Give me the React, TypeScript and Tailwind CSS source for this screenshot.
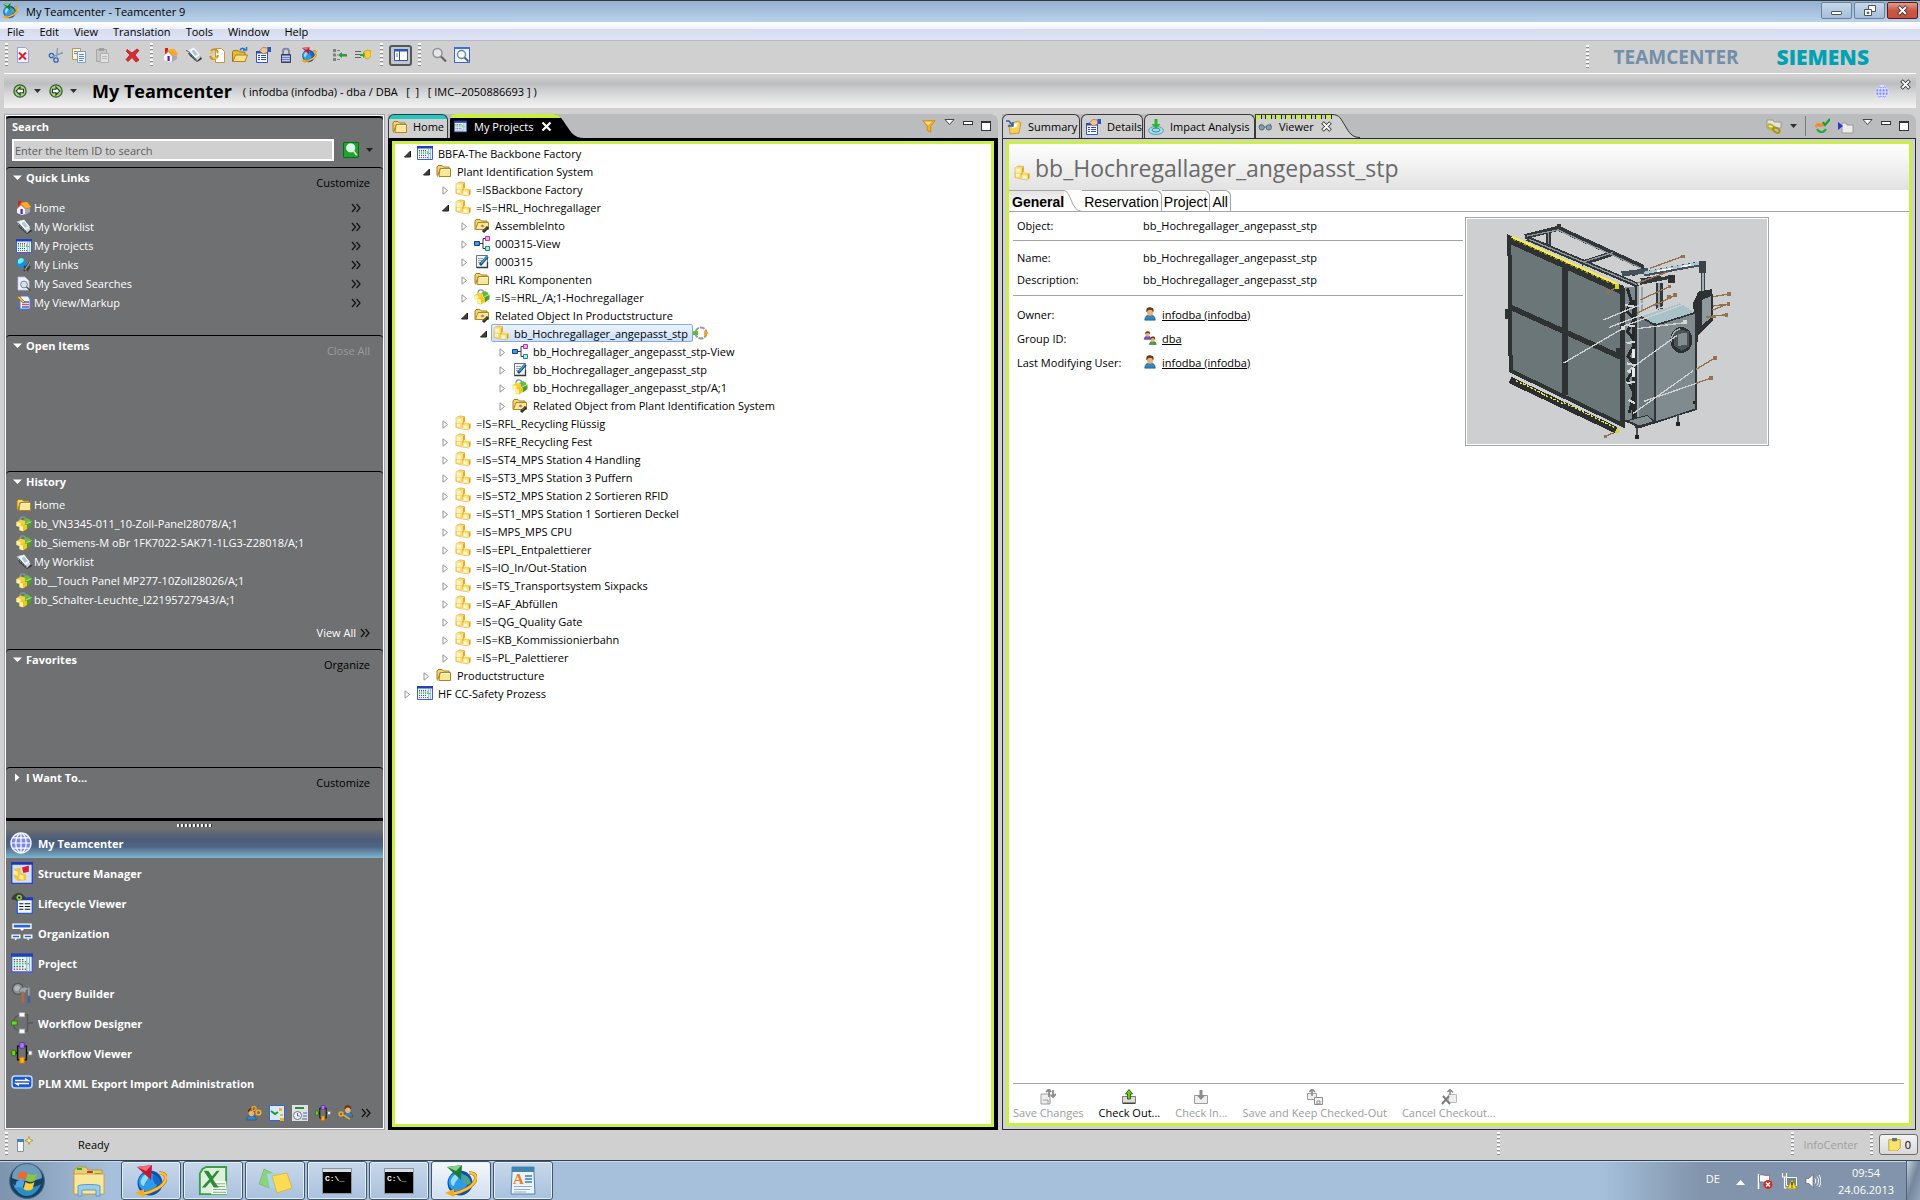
import React from 'react'

type P = { children?: React.ReactNode; s?: number; box?: string; className?: string }

function Svg({ children, s = 16, box = '0 0 16 16', className = '' }: P) {
  return (
    <svg width={s} height={s} viewBox={box} className={'shrink-0 ' + className} fill="none" aria-hidden="true">
      {children}
    </svg>
  )
}

const Globe = ({ s = 16, pale = false }: { s?: number; pale?: boolean }) => (
  <Svg s={s}>
    <circle cx="8" cy="8" r="7.3" fill={pale ? '#7f8dfb' : '#7c88ee'} stroke="#f4f6ff" strokeWidth={pale ? 0.8 : 1} />
    <path d="M8 1v14M1 8h14M2.4 4.3h11.2M2.4 11.7h11.2" stroke="#fff" strokeWidth="0.9" />
    <ellipse cx="8" cy="8" rx="3.8" ry="7" stroke="#fff" strokeWidth="0.9" />
  </Svg>
)

const TcLogo = ({ s = 16, green = false }: { s?: number; green?: boolean }) => (
  <Svg s={s} box="0 0 32 32">
    <circle cx="15" cy="18" r="12.5" fill="#0c4fb4" />
    <circle cx="13" cy="17" r="9.5" fill="#2f9be8" />
    <path d="M6 15c2-5 6-7 9-6-1 5-5 7-6 12-2 0-4-3-3-6z" fill="#8ee0f4" />
    <path d="M18 10c4 0 7 3 8 8-3 3-6 2-7-1-1-2-2-4-1-7z" fill={green ? '#4fa48c' : '#1369cc'} />
    <path d="M24 8c6 0 8 3 6 8-3 6-12 11-23 13" stroke="#b8720a" strokeWidth="3.6" />
    <path d="M24 8c6 0 8 3 6 8-3 6-12 11-23 13" stroke="#fcc335" strokeWidth="2.4" />
    <path d="M0 28l9-4v8z" fill="#f5ad1e" />
    <path d="M2 2l15-2-1 15z" fill={green ? '#1c7c34' : '#c9142c'} />
    <path d="M2 2l15-2-6 6z" fill={green ? '#8ccf8c' : '#e8707c'} />
  </Svg>
)

const House = () => (
  <Svg>
    <path d="M2 1h3v6H2z" fill="#e01818" />
    <path d="M1 9l4-4 4 4v5l-3 1-5-2z" fill="#f4f4fa" />
    <path d="M9 9l5-1v4l-5 3z" fill="#a9a9b4" />
    <path d="M4.500 9h2.200v5H4.500z" fill="#4a22c4" />
    <path d="M0 9l5-5 4 5 6-2-4-5-6 1z" fill="#f58a10" />
    <path d="M5 3l6-1 4 5-5 1.500z" fill="#fbab28" />
  </Svg>
)

const Worklist = () => (
  <Svg>
    <path d="M3 8l3-6 9 8 1 2-5 3z" fill="#2e3337" />
    <path d="M0 3l5-2 10 9-4 4z" fill="#cdd4d8" />
    <path d="M3 3l5-2.500L14 8l-5 3z" fill="#f6fafc" />
    <path d="M5.500 4L8 2.500l4 5L9 9z" fill="#a9c9e2" />
    <path d="M0 3.500l2.500 1 8 8.500" stroke="#5c6368" />
    <path d="M2 7l2-1M4 9l2-1M6 11l2-1M8 13l2-1" stroke="#4a5055" />
  </Svg>
)

const ProjectIcon = ({ s = 16 }: { s?: number }) => (
  <Svg s={s}>
    <path d="M.5 1.500h15v13H.5z" fill="#d9fbfb" stroke="#4a58e8" />
    <path d="M0 1h16v2.500H0z" fill="#2440b8" />
    <path d="M2 5.500h7M2 10.500h7" stroke="#35556a" strokeDasharray="1 1" />
    <path d="M2 7h9M2 12.500h9" stroke="#e4304c" strokeDasharray="1 1" />
    <path d="M2 8.500h12" stroke="#2cc850" strokeDasharray="1 1" />
    <path d="M11.500 4v10M13.500 4v10" stroke="#8fa4b4" strokeWidth="0.7" />
  </Svg>
)

const Links = () => (
  <Svg>
    <circle cx="5.500" cy="6" r="5" fill="#178fdc" />
    <path d="M2 3c3-3 5-2 6 0-1 3-5 5-6 3z" fill="#6ff0dc" />
    <path d="M8 14l3-5 3-4M11 14l3-5M8 9l3 3" stroke="#3c3f42" strokeWidth="2" />
    <path d="M9 13l3-5 2-3" stroke="#b4b8ba" />
  </Svg>
)

const SavedSearch = () => (
  <Svg>
    <path d="M2 1h7l4 4v9H2z" fill="#eef0ff" stroke="#b9bfe8" strokeWidth="0.8" />
    <circle cx="8" cy="8.500" r="3.400" fill="#d4e2ea" stroke="#7c8488" />
    <path d="M10.500 11l4 3.500" stroke="#4c5054" strokeWidth="1.600" />
  </Svg>
)

const Markup = () => (
  <Svg>
    <path d="M4 1h8l2 3v10H4z" fill="#f4f7ff" stroke="#4a70dc" />
    <path d="M6 7h7M6 12h7" stroke="#3a62d8" strokeWidth="1.500" />
    <path d="M6 9.500h7" stroke="#e0504c" strokeWidth="1.500" />
    <path d="M1 2l2-1 6 6-2 1z" fill="#f6c540" stroke="#8c5410" strokeWidth="0.7" />
    <path d="M0 13h4" stroke="#3a62d8" />
  </Svg>
)

const Folder = () => (
  <Svg>
    <path d="M1 12.500V4l1-1.500h4L7.500 4H13v2" fill="#f3d672" stroke="#a67c17" />
    <path d="M4 5.500h10.500v8H3z" fill="#fbe79b" stroke="#b08520" />
    <path d="M1.500 13.500L4 6" stroke="#b08520" />
    <path d="M5 6.500h9" stroke="#fffbe0" />
  </Svg>
)

const RelFolder = () => (
  <Svg>
    <path d="M1 12.500V4l1-1.500h4L7.500 4H13v2" fill="#f3d672" stroke="#a67c17" />
    <path d="M1.500 12.500L4 5.500h10.500v7z" fill="#fbe79b" stroke="#b08520" />
    <path d="M6.500 9l2-1.500 2 1.500-2 1.500z" fill="#a08c50" />
    <path d="M9 15l5-5" stroke="#26282a" strokeWidth="3" />
    <path d="M10 13.500l3-3" stroke="#93989a" strokeWidth="0.8" />
  </Svg>
)

const Item = ({ s = 16 }: { s?: number }) => (
  <Svg s={s}>
    <path d="M1.500 2.500L5 .8l5 1-2.500 1.400z" fill="#fbd660" />
    <path d="M7.500 3.200L10 1.800v5L7.500 8z" fill="#f0a816" />
    <path d="M1.500 2.500l6 .7v4.800l-6-.8z" fill="#fde98a" />
    <path d="M.6 7.500l6.200.8v5.200l-6.200-1z" fill="#fbdc62" />
    <path d="M6.800 8.300L9 7v5l-2.200 1.500z" fill="#f0a816" />
    <path d="M7.500 9.500l2.200-2 5.800.7-2 1.800z" fill="#fbd242" />
    <path d="M13.500 10l2-1.800v4.800l-2 1.900z" fill="#e8980c" />
    <path d="M7.500 9.500l6 .5v4.900l-6-.9z" fill="#fdeb94" />
    <path d="M2.500 4h3.500v2.500H2.500zM1.800 9h3.500v2.500H1.800zM8.800 10.800h3.200v2.500H8.800z" fill="#fff9dc" />
    <path d="M1 2.500v10l6 1.500 6.500 1M1.500 2.500L5 .8l5 1" stroke="#dc9434" strokeWidth="0.500" />
  </Svg>
)

const Revision = () => (
  <Svg>
    <path d="M4 4C4 0 9 0 9.500 3" stroke="#7b9aa6" strokeWidth="1.400" />
    <path d="M7 4l4-2 3.500 2-1 3.500-5 .5z" fill="#6cb844" />
    <path d="M.5 6l4-2.500L9 5v4l-4 2-4.500-1z" fill="#f6d238" />
    <path d="M.5 6l4 1v4l-4-1z" fill="#fff4a8" />
    <path d="M10 8l5.500-2.500v4.500L11 13.500z" fill="#4aa028" />
    <path d="M10 8l5.500-2.500" stroke="#b8e896" />
    <path d="M3.500 9.500l4-1.500L11 9v4l-4 2.500-3.500-1z" fill="#f2c424" />
    <path d="M3.500 9.500l3.500 1v4.500l-3.500-1z" fill="#fff4a8" />
  </Svg>
)

const ViewIcon = () => (
  <Svg>
    <path d="M6 8.500h3V3.500h2M9 8.500v5h2" stroke="#30383c" />
    <path d="M.5 6.500h5v4h-5z" fill="#3ba0d8" stroke="#1c3c94" />
    <path d="M11.500 1.500h4v4h-4z" fill="#f6a8ee" stroke="#c030b4" />
    <path d="M11.500 11.500h4v4h-4z" fill="#a6efe0" stroke="#1f8f7c" />
  </Svg>
)

const DocPen = () => (
  <Svg>
    <path d="M2.500 2.500h11v12h-11z" fill="#f3f5f6" stroke="#6c7276" />
    <path d="M4 5.500h5M4 7.500h4M4 9.500h3" stroke="#9ba2a6" />
    <path d="M2.500 14.500h11V9" stroke="#33383c" strokeWidth="1.300" />
    <path d="M6 12L13.500 3.500" stroke="#12486f" strokeWidth="2.800" />
    <path d="M7 10.500l6.500-7.500" stroke="#3fa4e6" strokeWidth="1.300" />
  </Svg>
)

const Person = ({ x = 0, y = 0, body = '#2f86c4', k = 1 }: { x?: number; y?: number; body?: string; k?: number }) => (
  <g transform={`translate(${x} ${y}) scale(${k})`}>
    <path d="M2 15c0-4 2-6 6-6s6 2 6 6z" fill={body} stroke="#24485f" strokeWidth="0.7" />
    <ellipse cx="8" cy="5.500" rx="3.600" ry="4.600" fill="#f3ae72" />
    <path d="M4 6C3 1 6 0 9 .5 12 1 13 3 11.500 6L10 3.500 6.500 3z" fill="#5c3a20" />
  </g>
)

const TOOL: Record<string, React.ReactNode> = {
  close: (
    <>
      <path d="M2.500.5h8l3 3v12h-11z" fill="#f2f4ff" stroke="#98a2d8" />
      <path d="M4 5.500l7 7M11 5.500l-7 7" stroke="#d8242c" strokeWidth="2" />
    </>
  ),
  cut: (
    <>
      <circle cx="3.500" cy="8.500" r="2.200" stroke="#2d68b0" strokeWidth="1.300" />
      <circle cx="8" cy="13" r="2.200" stroke="#2d68b0" strokeWidth="1.300" />
      <path d="M5 9.500l10-4M8.500 11L9.500 1" stroke="#7ba0c0" strokeWidth="1.400" />
    </>
  ),
  copy: (
    <>
      <path d="M1.500 1.500h8v11h-8z" fill="#f8f4dc" stroke="#b59c4c" />
      <path d="M6.500 4.500h8v11h-8z" fill="#eef6ff" stroke="#8c9cc0" />
      <path d="M3 4.500h3M3 6.500h3M8 7.500h5M8 9.500h5M8 11.500h5M8 13.500h4" stroke="#5f8cc8" />
    </>
  ),
  paste: (
    <>
      <path d="M2.500 2.500h10v12h-10z" fill="#c6c6c6" stroke="#a8a8a8" />
      <path d="M5 1h5v3H5z" fill="#a0a0a0" />
      <path d="M6.500 6.500h8v9h-8z" fill="#e2e2e2" stroke="#b2b2b2" />
      <path d="M8 9.500h5M8 11.500h5" stroke="#b8b8b8" />
    </>
  ),
  del: <path d="M2 2.500l5 3.500 5-4 2 1.500-4 4.500 4 5-3 2-4-4.500-4 4-2-2L5 8 1.500 4.500z" fill="#dc2a30" stroke="#a01018" strokeWidth="0.7" />,
  refreshDoc: (
    <>
      <path d="M6.500 1.500h6l3 3v11h-9z" fill="#fff" stroke="#c49a38" />
      <path d="M2 4c4-4 8 0 6 2M9 8c-1 5-7 5-8 1" stroke="#c8941c" strokeWidth="2" />
      <path d="M1 6l3 0M8 11l-4 0" stroke="#f4c53c" strokeWidth="2" />
    </>
  ),
  openFolder: (
    <>
      <path d="M.5 14.500V5l1-1.500H6L7.500 5H13v9.500z" fill="#e9b938" stroke="#a07818" />
      <path d="M1 14.500L3.500 8h12L13 14.500z" fill="#fbe084" stroke="#b08520" />
      <path d="M8 3.500c1-3 4-3 5 0M11 3h3.500V0" stroke="#1f6fd0" strokeWidth="1.500" />
    </>
  ),
  props: (
    <>
      <path d="M1.500 4.500h11v11h-11z" fill="#fff" stroke="#3454dc" />
      <path d="M1 4h12v2.500H1z" fill="#2846d0" />
      <path d="M3 8.500h2M6 8.500h5M3 10.500h2M6 10.500h5M3 12.500h2M6 12.500h5" stroke="#2846d0" />
      <path d="M4 4l4-3.500 5 .5v4L8 7 6 5z" fill="#f4c68c" stroke="#8c5c20" strokeWidth="0.6" />
      <path d="M12.500 0H16v5h-3.500z" fill="#2456c4" />
    </>
  ),
  lock: (
    <>
      <path d="M5 8V4c0-3 6-3 6 0v4" stroke="#8088a8" strokeWidth="2" />
      <path d="M3.500 7.500h9v8h-9z" fill="#7480b4" stroke="#343c60" />
      <path d="M4 9.500h8M4 11.500h8M4 13.500h8" stroke="#c0c8e8" />
    </>
  ),
  insL: (
    <>
      <path d="M1 2h3v3H1zM1 6.500h3v3H1zM1 11h3v3H1z" fill="#7c8284" />
      <path d="M5 3.500h3M5 8h1M5 12.500h3" stroke="#7c8284" />
      <path d="M6 8l4-3v2h5v2.500h-5V11z" fill="#2d9c34" />
    </>
  ),
  insR: (
    <>
      <path d="M0 4.500h6M0 7.500h6M0 10.500h6" stroke="#5c6466" />
      <path d="M5 7h3V5l3 3-3 3V9H5z" fill="#2fa838" />
      <path d="M9 4.500l4-1.500 3 1v5l-3 3-3-1z" fill="#f6cf30" stroke="#b88a10" strokeWidth="0.6" />
    </>
  ),
  find: (
    <>
      <circle cx="6.500" cy="6" r="4.500" fill="#e4e8ea" stroke="#8e9294" strokeWidth="1.500" />
      <path d="M10 9.500l5 5" stroke="#5e6264" strokeWidth="2" />
    </>
  ),
  findBox: (
    <>
      <path d="M.5.5h15v15H.5z" fill="#eef4ff" stroke="#3a64d4" />
      <path d="M0 0h16v2H0z" fill="#3a70e0" />
      <circle cx="7.500" cy="7.500" r="4" fill="#fff" stroke="#5f84a4" strokeWidth="1.400" />
      <path d="M10.500 10.500l4 4" stroke="#5a5e60" strokeWidth="1.800" />
    </>
  ),
}

function ToolBtn({ id, label }: { id: string; label: string }) {
  return (
    <button aria-label={label} className="flex h-6 w-[23px] items-center justify-center">
      {id === 'home' ? <House /> : id === 'worklist' ? <Worklist /> : id === 'tc' ? <TcLogo s={16} /> : <Svg>{TOOL[id]}</Svg>}
    </button>
  )
}

const Grip = ({ h = 'h-6' }: { h?: string }) => (
  <span className={'w-[3px] shrink-0 bg-[repeating-linear-gradient(to_bottom,#f8f8f8_0_2px,#8c8c8c_2px_3px,transparent_3px_4px)] ' + h} />
)
const Sep = () => <span className="h-5 w-px shrink-0 bg-[#7c7c7c]" />
const Caret = ({ c = '#303030' }: { c?: string }) => (
  <svg width="7" height="4" viewBox="0 0 7 4" className="shrink-0" aria-hidden="true">
    <path d="M0 0h7L3.500 4z" fill={c} />
  </svg>
)
const Chevrons = () => (
  <Svg s={10} box="0 0 10 10">
    <path d="M1 1l3.500 4L1 9M5.500 1L9 5 5.500 9" stroke="#151515" strokeWidth="1.300" />
  </Svg>
)
const CloseX = ({ dark = false }: { dark?: boolean }) => (
  <Svg s={11} box="0 0 11 11">
    <path d="M1.500 1.500l8 8M9.500 1.500l-8 8" stroke={dark ? '#fff' : '#333'} strokeWidth={dark ? 2.2 : 3.6} />
    {!dark && <path d="M2 2l7 7M9 2L2 9" stroke="#fff" strokeWidth="1.800" />}
  </Svg>
)

function TitleBar() {
  return (
    <header className="flex h-[22px] items-start justify-between border-t border-[#35383c] bg-gradient-to-b from-[#94b0cf] to-[#bad2eb] pl-[2px]">
      <div className="flex h-5 items-center gap-2">
        <TcLogo s={16} green />
        <span>My Teamcenter - Teamcenter 9</span>
      </div>
      <div className="flex gap-[2px] pr-[2px]">
        <button aria-label="Minimize" className="mt-px flex h-[17px] w-[31px] items-center justify-center rounded-[2px] border border-[#6c819c] bg-gradient-to-b from-[#c6d8ea] to-[#a5bedb]">
          <span className="mt-1 h-[4px] w-[11px] rounded-[1px] border border-[#4c5560] bg-white" />
        </button>
        <button aria-label="Restore" className="mt-px flex h-[17px] w-[31px] items-center justify-center rounded-[2px] border border-[#6c819c] bg-gradient-to-b from-[#c6d8ea] to-[#a5bedb]">
          <Svg s={12} box="0 0 12 12">
            <path d="M4.500.5h7v6h-7z" fill="#fff" stroke="#4c5560" />
            <path d="M.5 4.500h7v6h-7z" fill="#fff" stroke="#4c5560" />
            <path d="M3 7h2v1.500H3z" fill="#8ea6c0" stroke="#4c5560" strokeWidth="0.7" />
          </Svg>
        </button>
        <button aria-label="Close" className="mt-px flex h-[17px] w-[31px] items-center justify-center rounded-[2px] border border-[#571b20] bg-gradient-to-b from-[#e09a8e] via-[#c75845] to-[#c9503c]">
          <CloseX />
        </button>
      </div>
    </header>
  )
}

function Menu() {
  const items = ['File', 'Edit', 'View', 'Translation', 'Tools', 'Window', 'Help']
  return (
    <nav className="flex h-[19px] items-center gap-[15px] border-b border-[#b2b8cc] bg-[linear-gradient(#fff,#eef1f9_38%,#d6dbee_40%,#dfe4f6)] pl-[7px]">
      {items.map((m) => (
        <button key={m}>{m}</button>
      ))}
    </nav>
  )
}

function Toolbar() {
  return (
    <div className="flex h-8 items-center bg-[#d0d0d0] pl-[5px] pb-1">
      <Grip />
      <div className="flex items-center pl-[3px]">
        <ToolBtn id="close" label="Close" />
        <span className="px-[5px]"><Sep /></span>
        <ToolBtn id="cut" label="Cut" />
        <ToolBtn id="copy" label="Copy" />
        <ToolBtn id="paste" label="Paste" />
        <span className="px-[4px]"><Sep /></span>
        <ToolBtn id="del" label="Delete" />
        <span className="flex px-[6px]"><Grip /></span>
        <ToolBtn id="home" label="Home" />
        <ToolBtn id="worklist" label="My Worklist" />
        <ToolBtn id="refreshDoc" label="Refresh" />
        <ToolBtn id="openFolder" label="Open" />
        <ToolBtn id="props" label="Properties" />
        <ToolBtn id="lock" label="Access" />
        <ToolBtn id="tc" label="Launch" />
        <span className="px-[4px]"><Sep /></span>
        <ToolBtn id="insL" label="Insert left" />
        <ToolBtn id="insR" label="Insert right" />
        <span className="flex px-[6px]"><Grip /></span>
        <button aria-label="Toggle navigation pane" className="flex h-[21px] w-[23px] items-center justify-center rounded-[3px] border-2 border-[#55585c] bg-[#c4c6c8]">
          <Svg s={14} box="0 0 14 14">
            <path d="M.5 1.500h13v11H.5z" fill="#fff" stroke="#2a56b4" />
            <path d="M0 1h14v2.500H0z" fill="#2a56b4" />
            <path d="M5.500 3v10" stroke="#2a56b4" />
            <path d="M2 6h2M2 8h2" stroke="#5f84cc" />
          </Svg>
        </button>
        <span className="flex px-[6px]"><Grip /></span>
        <ToolBtn id="find" label="Find" />
        <ToolBtn id="findBox" label="Find in display" />
      </div>
      <div className="ml-auto flex items-center pt-1 pr-[51px] leading-6">
        <span className="mr-[25px] flex"><Grip /></span>
        <span className="mr-[38px] text-[19px] font-bold text-[#728ea8]">TEAMCENTER</span>
        <span className="text-[21px] font-extrabold text-[#00a1b1]">SIEMENS</span>
      </div>
    </div>
  )
}

const NavArrow = ({ flip = false }: { flip?: boolean }) => (
  <Svg s={14} className={flip ? '-scale-x-100' : ''}>
    <circle cx="8" cy="8" r="7" fill="#a5d488" stroke="#36592c" strokeWidth="1.400" />
    <path d="M8 3.500L3.500 8 8 12.500V10h4V6H8z" fill="#fff" stroke="#27401e" strokeWidth="1.300" />
  </Svg>
)

function Banner() {
  return (
    <div className="mr-1 ml-1 flex h-[35px] items-center border-t border-white bg-[linear-gradient(#d4d4d4,#bdbec0_28%,#d8d9da_60%,#f4f4f4)] pl-[9px]">
      <button aria-label="Back"><NavArrow /></button>
      <span className="ml-[7px]"><Caret /></span>
      <button aria-label="Forward" className="ml-[8px]"><NavArrow flip /></button>
      <span className="ml-[7px]"><Caret /></span>
      <h1 className="ml-[15px] text-[18px] leading-6 font-bold">My Teamcenter</h1>
      <p className="ml-[11px] whitespace-pre">( infodba (infodba) - dba / DBA   [  ]   [ IMC--2050886693 ] )</p>
      <div className="mr-[5px] ml-auto flex items-start gap-[11px]">
        <span className="pt-[2px]"><Globe s={14} pale /></span>
        <button aria-label="Close perspective" className="-mt-[4px]"><CloseX /></button>
      </div>
    </div>
  )
}

type SecProps = { title: string; open?: boolean; link?: string; muted?: boolean; h: string; children?: React.ReactNode }

function Section({ title, open = true, link, muted, h, children }: SecProps) {
  return (
    <section className={'rounded-t-[4px] border-t border-black ' + h}>
      <div className="flex h-[21px] items-start justify-between pr-[13px] pl-[7px]">
        <h2 className="flex h-[19px] items-center gap-[4px] font-bold">
          <svg width="9" height="9" viewBox="0 0 9 9" aria-hidden="true">
            <path d={open ? 'M0 2.500h9L4.500 7z' : 'M2 .5v8L6.500 4.500z'} fill="#fff" />
          </svg>
          {title}
        </h2>
        {link && <button className={muted ? 'mt-[7px] text-[#9b9c9e]' : 'mt-[7px] text-black'}>{link}</button>}
      </div>
      {children}
    </section>
  )
}

const LinkRow = ({ icon, label, more }: { icon: React.ReactNode; label: string; more?: boolean }) => (
  <li className="flex h-[19px] items-center gap-[2px] pr-[22px] pl-[10px]">
    {icon}
    <a href="#">{label}</a>
    {more && <span className="ml-auto"><Chevrons /></span>}
  </li>
)

const APPS: [string, React.ReactNode][] = [
  [
    'Structure Manager',
    <Svg s={22} key="a">
      <path d="M.5.5h15v15H.5z" fill="#cfe0fb" stroke="#2444e0" />
      <path d="M0 0h16v2H0z" fill="#1f34b8" />
      <path d="M2 5l5-1v4l4 1v4l-6 1-3-3z" fill="#f6c434" />
      <path d="M2 6l3 1v3l-3-1zM6 9l3 1v3l-3-1z" fill="#fff0a8" />
      <path d="M8 4l5-1.500V7L9 8z" fill="#d81c2c" />
    </Svg>,
  ],
  [
    'Lifecycle Viewer',
    <Svg s={22} key="b">
      <path d="M4.500 4.500h11v11h-11z" fill="#f0f8ff" stroke="#2c5cdc" />
      <path d="M4 4h12v2H4z" fill="#1f34b8" />
      <path d="M6 8.500h3M10 8.500h4M6 10.500h3M10 10.500h4M6 12.500h3M10 12.500h4" stroke="#111" strokeWidth="0.800" />
      <path d="M0 5C3-1 8 0 10.500 4 7 7.500 3 6 0 5z" fill="#3c3c38" />
      <circle cx="6" cy="4" r="2" fill="#8cc43c" />
      <circle cx="6" cy="4" r="0.800" fill="#111" />
    </Svg>,
  ],
  [
    'Organization',
    <Svg s={22} key="c">
      <path d="M1.500 1.500h13v3h-13z" fill="#2464d8" stroke="#fff" />
      <path d="M6.500 5h3L8 6.500z" fill="#fff" />
      <path d="M.8 9.500h5.600v2H.8zM9.500 9.500h5.600v2H9.500z" fill="#2464d8" stroke="#fff" />
      <path d="M2.500 12h2l-1 1.500zM11.500 12h2l-1 1.500z" fill="#fff" />
    </Svg>,
  ],
  ['Project', <ProjectIcon s={22} key="d" />],
  [
    'Query Builder',
    <Svg s={22} key="e">
      <circle cx="5" cy="5" r="4" fill="#8f9498" stroke="#55585a" />
      <circle cx="4.500" cy="4.500" r="2" fill="#b4b9bc" />
      <path d="M6 6c2-3 5-3 7-1l-2 1v2H7z" fill="#9ea6aa" stroke="#5c6266" strokeWidth="0.5" />
      <path d="M8.500 7v8" stroke="#b4683c" strokeWidth="2" />
      <path d="M13 4v7" stroke="#a4acb0" />
      <path d="M13 10v5" stroke="#4c5c94" strokeWidth="2" />
    </Svg>,
  ],
  [
    'Workflow Designer',
    <Svg s={22} key="f">
      <path d="M6 2.500C3 3 2 5 2 7M2 9c0 3 1 4 4 4.500M9 2h3v12H9M12 8h4" stroke="#55585a" />
      <path d="M6 .5h4v3H6zM6 12.500h4v3H6z" fill="#fff" stroke="#aaa" strokeWidth="0.5" />
      <path d="M.3 6.500h4.200v3H.3z" fill="#6cd81c" stroke="#2f6c10" strokeWidth="0.6" />
    </Svg>,
  ],
  ['Workflow Viewer', <Flow s={22} key="g" />],
  [
    'PLM XML Export Import Administration',
    <svg width="22" height="22" viewBox="0 0 22 22" fill="none" key="h" className="shrink-0" aria-hidden="true">
      <rect x="1" y="4" width="20" height="12" rx="3" fill="#1c54d4" stroke="#b8dcff" strokeWidth="1.500" />
      <path d="M4 8.500h13l-3-2M18 11.500H5l3 2" stroke="#fff" strokeWidth="1.500" />
    </svg>,
  ],
]

function Flow({ s = 16 }: { s?: number }) {
  return (
    <Svg s={s}>
      <path d="M8 3H4.800v10h6.400V3zM3 8h2M11 8h2" stroke="#111" />
      <path d="M6.300.5h3.400v4H6.300z" fill="#a97ce8" stroke="#5c2cb4" strokeWidth="0.7" />
      <path d="M.5 6h2.800v4H.5z" fill="#6cd81c" stroke="#2f6c10" strokeWidth="0.7" />
      <path d="M12.700 6.500h2.600v3h-2.600z" fill="#fff" stroke="#888" strokeWidth="0.7" />
      <path d="M6.300 11h3.400v4.500H6.300z" fill="#fbb014" stroke="#c46c08" strokeWidth="0.7" />
    </Svg>
  )
}

function Sidebar() {
  return (
    <aside className="mr-px ml-1 flex w-[381px] shrink-0 flex-col border border-[#a3a5b0] bg-white p-px text-white">
      <div className="flex flex-1 flex-col bg-[#6e7072]">
        <section className="h-[51px] rounded-t-[4px] border-t-2 border-black px-[6px]">
          <h2><label htmlFor="item-id" className="flex h-[17px] items-center font-bold">Search</label></h2>
          <div className="flex items-center pt-[3px]">
            <input
              id="item-id"
              placeholder="Enter the Item ID to search"
              className="mt-px h-[22px] w-[322px] rounded-none border-2 border-white bg-[#d0d0d0] px-px text-black placeholder:text-[#5c5c5c]"
            />
            <button aria-label="Search" className="ml-[9px] flex h-4 w-4 items-center justify-center rounded-[1px] border border-[#0a6c18] bg-[#22a32c]">
              <Svg s={13}>
                <circle cx="7" cy="6" r="5" fill="#d8f4ec" stroke="#f4fff8" />
                <path d="M10.500 10l4 5" stroke="#e8e4c8" strokeWidth="2" />
              </Svg>
            </button>
            <span className="ml-[7px]"><Caret c="#222" /></span>
          </div>
        </section>
        <Section title="Quick Links" link="Customize" h="h-[168px]">
          <ul className="mt-[9px]">
            <LinkRow icon={<House />} label="Home" more />
            <LinkRow icon={<Worklist />} label="My Worklist" more />
            <LinkRow icon={<ProjectIcon />} label="My Projects" more />
            <LinkRow icon={<Links />} label="My Links" more />
            <LinkRow icon={<SavedSearch />} label="My Saved Searches" more />
            <LinkRow icon={<Markup />} label="My View/Markup" more />
          </ul>
        </Section>
        <Section title="Open Items" link="Close All" muted h="h-[136px]" />
        <Section title="History" h="h-[178px]">
          <ul className="mt-[2px]">
            <LinkRow icon={<Folder />} label="Home" />
            <LinkRow icon={<Revision />} label="bb_VN3345-011_10-Zoll-Panel28078/A;1" />
            <LinkRow icon={<Revision />} label="bb_Siemens-M oBr 1FK7022-5AK71-1LG3-Z28018/A;1" />
            <LinkRow icon={<Worklist />} label="My Worklist" />
            <LinkRow icon={<Revision />} label="bb__Touch Panel MP277-10Zoll28026/A;1" />
            <LinkRow icon={<Revision />} label="bb_Schalter-Leuchte_I22195727943/A;1" />
          </ul>
          <div className="mt-4 flex justify-end pr-[13px]">
            <a href="#" className="flex items-center gap-1">View All <Chevrons /></a>
          </div>
        </Section>
        <Section title="Favorites" link="Organize" h="h-[118px]" />
        <Section title="I Want To..." link="Customize" open={false} h="h-[51px] grow" />
        <div className="flex h-[12px] items-center justify-center border-t-[3px] border-black">
          <span className="h-[3px] w-[36px] bg-[repeating-linear-gradient(to_right,#f0f0f0_0_2px,#333_2px_3px,transparent_3px_4px)]" />
        </div>
        <ul className="font-bold">
          <li className="flex h-[28px] items-center gap-[6px] bg-[linear-gradient(#686c72,#4c5c78_35%,#4f6585_60%,#7db6cf)] pb-[2px] pl-[4px]">
            <Globe s={22} />
            <a href="#">My Teamcenter</a>
          </li>
          {APPS.map(([name, icon]) => (
            <li key={name} className="flex h-[30px] items-center gap-[5px] pl-[5px]">
              {icon}
              <a href="#">{name}</a>
            </li>
          ))}
        </ul>
        <div className="flex h-[30px] items-center justify-end gap-[7px] pr-[12px]">
          <Svg>
            <Person k={0.8} y={3} x={-1} />
            <circle cx="8" cy="3.500" r="2" stroke="#e8a020" strokeWidth="1.500" />
            <circle cx="12.500" cy="7.500" r="2.300" stroke="#f0b030" strokeWidth="1.600" />
          </Svg>
          <Svg>
            <path d="M.5.5h15v15H.5z" fill="#dbe8fb" stroke="#3a64d4" />
            <path d="M2 6l4 3 3-2" stroke="#189c28" strokeWidth="2" />
            <path d="M10 3h3v3h-3zM11 9h3v2h-3zM11 13h4v3h-4z" fill="#e8b82c" />
          </Svg>
          <Svg>
            <path d="M0 0h16v16H0z" fill="#dfe2e4" />
            <path d="M3 3h9" stroke="#2e8c3c" strokeWidth="2" />
            <circle cx="5.500" cy="10.500" r="4" fill="#eef2f6" stroke="#6c7680" />
            <path d="M5.500 8v3h2M11 8h4M11 11h4M10 14h5" stroke="#5566a0" />
          </Svg>
          <Flow />
          <Svg>
            <Person k={0.8} x={3.500} />
            <circle cx="3" cy="9" r="2" stroke="#f0a81c" strokeWidth="1.500" />
            <path d="M5 10l7 4" stroke="#f0a81c" strokeWidth="1.800" />
          </Svg>
          <Chevrons />
        </div>
      </div>
    </aside>
  )
}

type Node = [level: number, icon: string, label: string, open?: boolean, selected?: boolean]

const TREE: Node[] = [
  [0, 'project', 'BBFA-The Backbone Factory', true],
  [1, 'folder', 'Plant Identification System', true],
  [2, 'item', '=ISBackbone Factory'],
  [2, 'item', '=IS=HRL_Hochregallager', true],
  [3, 'rel', 'AssembleInto'],
  [3, 'view', '000315-View'],
  [3, 'doc', '000315'],
  [3, 'folder', 'HRL Komponenten'],
  [3, 'rev', '=IS=HRL_/A;1-Hochregallager'],
  [3, 'rel', 'Related Object In Productstructure', true],
  [4, 'item', 'bb_Hochregallager_angepasst_stp', true, true],
  [5, 'view', 'bb_Hochregallager_angepasst_stp-View'],
  [5, 'doc', 'bb_Hochregallager_angepasst_stp'],
  [5, 'rev', 'bb_Hochregallager_angepasst_stp/A;1'],
  [5, 'rel', 'Related Object from Plant Identification System'],
  [2, 'item', '=IS=RFL_Recycling Flüssig'],
  [2, 'item', '=IS=RFE_Recycling Fest'],
  [2, 'item', '=IS=ST4_MPS Station 4 Handling'],
  [2, 'item', '=IS=ST3_MPS Station 3 Puffern'],
  [2, 'item', '=IS=ST2_MPS Station 2 Sortieren RFID'],
  [2, 'item', '=IS=ST1_MPS Station 1 Sortieren Deckel'],
  [2, 'item', '=IS=MPS_MPS CPU'],
  [2, 'item', '=IS=EPL_Entpalettierer'],
  [2, 'item', '=IS=IO_In/Out-Station'],
  [2, 'item', '=IS=TS_Transportsystem Sixpacks'],
  [2, 'item', '=IS=AF_Abfüllen'],
  [2, 'item', '=IS=QG_Quality Gate'],
  [2, 'item', '=IS=KB_Kommissionierbahn'],
  [2, 'item', '=IS=PL_Palettierer'],
  [1, 'folder', 'Productstructure'],
  [0, 'project', 'HF CC-Safety Prozess'],
]

const NODE_ICON: Record<string, React.ReactNode> = {
  project: <ProjectIcon />,
  folder: <Folder />,
  item: <Item />,
  rel: <RelFolder />,
  view: <ViewIcon />,
  doc: <DocPen />,
  rev: <Revision />,
}

function TreeRow({ node }: { node: Node }) {
  const [level, icon, label, open, selected] = node
  return (
    <li className="flex h-[18px] items-center" style={{ paddingLeft: level * 19 }}>
      <button aria-label={open ? 'Collapse' : 'Expand'} className="flex w-4 justify-center pt-[2px]">
        <svg width="7" height="9" viewBox="0 0 7 9" aria-hidden="true">
          {open ? <path d="M6.500 1v6H.5z" fill="#404040" stroke="#202020" /> : <path d="M1 .8v7.400L5.500 4.500z" fill="#fff" stroke="#949494" />}
        </svg>
      </button>
      <span
        className={
          selected
            ? 'flex h-[18px] items-center gap-[5px] rounded-[2px] border border-[#84acdd] bg-gradient-to-b from-[#eaf3fd] to-[#cbe0fa] pr-[4px] pl-px'
            : 'flex h-[18px] items-center gap-[5px] border border-transparent pl-px'
        }
      >
        {NODE_ICON[icon]}
        {label}
      </span>
      {selected && (
        <Svg>
          <circle cx="8" cy="8" r="5.500" stroke="#9a9a9a" strokeWidth="2" strokeDasharray="5 1" />
          <path d="M0 6h5v4H0z" fill="#5cc428" />
          <path d="M11 6l5 2-5 3z" fill="#f6a81c" />
        </Svg>
      )}
    </li>
  )
}

const ViewButtons = () => (
  <>
    <button aria-label="View menu" className="-mt-[8px]">
      <svg width="11" height="7" viewBox="0 0 11 7"><path d="M1 .5h9L5.500 5.500z" fill="#fff" stroke="#444" /></svg>
    </button>
    <button aria-label="Minimize view" className="-mt-[6px] h-[4px] w-[10px] border border-[#333] bg-white" />
    <button aria-label="Maximize view" className="h-[10px] w-[10px] border border-t-2 border-[#333] bg-white" />
  </>
)

function TreeView() {
  return (
    <section className="flex min-w-0 flex-[610] flex-col">
      <div className="flex h-6 rounded-tr-[8px] bg-[#bbbcbe]">
        <button className="flex h-6 w-[60px] items-center justify-between overflow-hidden rounded-t-[6px] border border-b-0 border-[#3a3a3a] bg-[linear-gradient(#22c8c2_0_4px,#d0d0d0_4px)] px-[3px]">
          <Folder />
          Home
        </button>
        <div className="ml-[2px] flex h-6 items-center gap-[7px] rounded-tl-[6px] bg-[linear-gradient(#c7ef3e_0_4px,#000_4px)] pt-px pl-[4px] text-white">
          <ProjectIcon s={13} />
          <button>My Projects</button>
          <button aria-label="Close tab" className="pl-px"><CloseX dark /></button>
        </div>
        <svg width="32" height="24" viewBox="0 0 32 24" aria-hidden="true">
          <path d="M0 0c8 0 10 5 14 11 5 7 8 13 18 13H0z" fill="#000" />
          <path d="M0 0c5 0 8 2 9 4H0z" fill="#c7ef3e" />
        </svg>
        <div className="ml-auto flex items-center gap-[8px] pr-[7px]">
          <button aria-label="Filter">
            <Svg s={14}>
              <path d="M1 2h14l-5 6v7l-4-2V8z" fill="#f8b028" stroke="#d08810" />
              <path d="M3 3h8L7 7z" fill="#ffe490" />
            </Svg>
          </button>
          <ViewButtons />
        </div>
      </div>
      <div className="flex flex-1 flex-col border-x-[4px] border-y-[3px] border-black">
        <div className="flex-1 border-[3px] border-[#caef45] bg-white">
          <ul className="pl-[4px]">
            {TREE.map((n, i) => (
              <TreeRow key={i} node={n} />
            ))}
          </ul>
        </div>
      </div>
    </section>
  )
}

function Machine() {
  return (
    <svg viewBox="81 57 900 675" className="block h-[225px] w-[300px] bg-[#cdcfd0]" fill="none" shapeRendering="crispEdges" role="img" aria-label="High-bay storage model">
      {/* upper frame */}
      <g stroke="#333739" strokeWidth="15">
        <path d="M255 110l100-25 255 117M262 115l330 140M325 95v45M425 190l100-32M350 80h14M520 158v10M575 222l40-14" />
      </g>
      <g stroke="#8b979b" strokeWidth="4">
        <path d="M262 108l92-18 250 115M268 118l322 135M325 98v34M430 186l88-28M560 215l50-4" />
      </g>
      {/* rack front */}
      <path d="M208 112l340 155v408L212 512z" fill="#6a7678" stroke="#2f3233" strokeWidth="12" />
      <path d="M210 118l336 152" stroke="#2f3233" strokeWidth="26" />
      <path d="M375 190v395M212 322l332 150M548 265v412" stroke="#2f3233" strokeWidth="16" />
      <path d="M196 328h16v30h-16zM528 445h40v24h-40z" fill="#2f3233" />
      <path d="M215 110l318 143" stroke="#f4ec4c" strokeWidth="7" />
      <path d="M220 118l308 139" stroke="#8c8820" strokeWidth="4" strokeDasharray="9 8" />
      <path d="M524 252h13v14h-13zM524 686h13v14h-13z" fill="#d8d428" />
      <path d="M210 540l318 150" stroke="#2b2d2e" strokeWidth="20" />
      <path d="M228 542l80 38M308 582l60 28M372 608l70 33M442 642l80 40" stroke="#e8e444" strokeWidth="4" strokeDasharray="7 5" />
      {/* gap between rack and cabinet */}
      <path d="M556 262l40 0v420l-40-20z" fill="#7c888b" />
      <path d="M562 265l12 40-14 30 24 20-22 40 26 30-24 44 24 30-26 40 20 40-14 60M580 300v370" stroke="#26292a" strokeWidth="9" />
      <path d="M556 315l30 5M558 375l30 5M560 430l28-6M560 490l28 6M560 550l28-6M566 600l20 10" stroke="#cfd8da" strokeWidth="6" />
      <path d="M576 448h14v26h-14zM576 504h14v26h-14z" fill="#e8eaea" />
      <path d="M590 255v428" stroke="#2d3132" strokeWidth="13" />
      <path d="M594 258v420" stroke="#93a1a5" strokeWidth="5" />
      <path d="M600 250l96-20M652 250v80M664 250v76M602 240l60-8" stroke="#34393b" strokeWidth="10" />
      <path d="M658 250v78M606 262v70" stroke="#98a5a9" strokeWidth="6" />
      <path d="M684 226h20v22h-20z" fill="#2f3233" />
      {/* arm and operator panel */}
      <path d="M545 222l80-10M612 222l176-32" stroke="#46525a" strokeWidth="15" />
      <path d="M612 219l174-31" stroke="#a9c6d2" strokeWidth="8" />
      <path d="M650 214l50-9M722 200l30-5" stroke="#f4f8fa" strokeWidth="5" />
      <path d="M776 184h22v34h-22z" fill="#3c4246" />
      <path d="M789 215v65" stroke="#3c4246" strokeWidth="12" />
      <path d="M789 218v55" stroke="#9fb0b8" strokeWidth="7" />
      <path d="M775 275l42-8 3 92-46 48-16-94z" fill="#2e3133" />
      <path d="M786 300l28-12v64l-28 24z" fill="#8e9a9e" />
      <path d="M770 330v96" stroke="#2e3133" strokeWidth="6" />
      {/* cabinet */}
      <path d="M597 350l48 26v290l-48 14z" fill="#6c787b" />
      <path d="M645 376l122-38v290l-122 38z" fill="#7f8b8f" />
      <path d="M602 350l118-40 47 28-122 38z" fill="#a9c2c8" />
      <path d="M645 370v296M602 350l43 26 122-38v290L600 682l-44-20" stroke="#303436" strokeWidth="5" />
      <path d="M562 662l60-16 20 18-44 14z" fill="#828e92" stroke="#303436" strokeWidth="3" />
      <ellipse cx="724" cy="420" rx="33" ry="39" fill="#2c2f30" />
      <path d="M703 394l10-8 34 8v46l-22 12-22-14z" fill="#4a5254" />
      <path d="M713 402l28-4v36l-28 4z" fill="#818d91" />
      <path d="M694 425c0-26 12-34 26-38" stroke="#a3b0b4" strokeWidth="4" />
      <path d="M591 683v28M714 646v26" stroke="#4a4e50" strokeWidth="4" />
      <path d="M585 706h12v12h-12zM708 666h13v12h-13zM760 602h6v10h-6z" fill="#202223" />
      {/* connection points */}
      <g stroke="#cfd2d2" strokeWidth="4">
        <path d="M371 489l178-104M490 360l140-58M508 382l170-65M548 380l190-70M560 515l150-108M590 386l145-18M580 640l180-128M612 604l160-55" />
      </g>
      <g stroke="#94714f" strokeWidth="4">
        <path d="M600 300l88-40M630 205l98-36M640 318l68-34M590 340l60-30M768 508l56-34M768 550l46-16M818 290l50-8M818 318l48-6M800 350l62-6M818 330l40-16M500 280l25-16M497 708l26-10M590 250l95-35" />
      </g>
      <g fill="#94714f">
        <path d="M724 165h10v10h-10zM683 254h10v10h-10zM680 284h12v12h-12zM700 278h12v12h-12zM862 276h10v12h-10zM860 306h10v12h-10zM855 338h10v12h-10zM818 468h12v12h-12zM808 528h12v12h-12zM497 274h9v9h-9zM493 704h9v9h-9zM797 347h32v6h-32z" />
      </g>
      <path d="M542 379h12v12h-12zM730 361h12v12h-12zM565 510h8v8h-8z" fill="#d8dada" />
    </svg>
  )
}

const RightTab = ({ icon, label, w }: { icon: React.ReactNode; label: string; w: string }) => (
  <button className={'flex h-6 items-center gap-[6px] rounded-t-[6px] border border-b-0 border-[#3a3a3a] bg-[#d0d0d0] pl-[3px] ' + w}>
    {icon}
    {label}
  </button>
)

function Field({ label, h, children }: { label: string; h: string; children: React.ReactNode }) {
  return (
    <div className={'flex items-center pb-[2px] pl-[4px] ' + h}>
      <dt className="w-[126px] shrink-0">{label}</dt>
      <dd className="flex items-center gap-[5px]">{children}</dd>
    </div>
  )
}

const ActionBtn = ({ label, off = true, children }: { label: string; off?: boolean; children: React.ReactNode }) => (
  <button disabled={off} className={'flex flex-col items-center ' + (off ? 'text-[#9c9c9c]' : 'text-black')}>
    <Svg>{children}</Svg>
    {label}
  </button>
)

const SubTab = ({ label }: { label: string }) => (
  <button className="h-[21px] rounded-tr-[6px] border-t border-r border-[#a4a4a4] px-[2px] pt-[2px]">{label}</button>
)

function ViewerPane() {
  return (
    <section className="mr-1 ml-[2px] flex min-w-0 flex-[914] flex-col">
      <div className="flex h-6 rounded-tr-[8px] bg-[#bbbcbe]">
        <RightTab
          w="w-[78px]"
          label="Summary"
          icon={
            <Svg>
              <path d="M3 5l9-3 3 2-2 10-9 1z" fill="#f6cf54" stroke="#b48a20" strokeWidth="0.7" />
              <path d="M6 5l6-1-1 4-5 1z" fill="#fffbe4" />
              <path d="M0 2l3 0 4 5M2 7h5V3" stroke="#2860b8" strokeWidth="1.500" />
            </Svg>
          }
        />
        <RightTab w="ml-px w-[62px]" label="Details" icon={<Svg>{TOOL.props}</Svg>} />
        <RightTab
          w="ml-px w-[111px]"
          label="Impact Analysis"
          icon={
            <Svg>
              <ellipse cx="8" cy="11.500" rx="7.500" ry="4" fill="#a8dcec" stroke="#58a4c4" />
              <ellipse cx="8" cy="11" rx="4" ry="2" stroke="#3c88b0" />
              <path d="M6.500 0h3v5h3L8 10 3.500 5h3z" fill="#2cb434" />
            </Svg>
          }
        />
        <div className="flex h-6 items-center border-t border-l border-[#3a3a3a] bg-[repeating-linear-gradient(to_right,#c7ef3e_0_5px,#222_5px_6px,#c4c4c4_6px_9px,#222_9px_10px)] bg-[length:100%_4px] bg-no-repeat">
          <div className="mt-[4px] flex h-[19px] items-center gap-[6px] bg-[#d0d0d0] pb-[4px] pl-[2px]">
            <Svg s={15}>
              <circle cx="4" cy="9" r="2.800" fill="#7ca4b4" stroke="#55686e" />
              <circle cx="11.500" cy="9" r="2.800" fill="#7ca4b4" stroke="#55686e" />
              <path d="M6.500 8.500h2.500M1 8L4 5M14 8l-1-3" stroke="#55686e" />
            </Svg>
            <button>Viewer</button>
            <button aria-label="Close tab" className="pl-px"><CloseX /></button>
          </div>
        </div>
        <svg width="28" height="24" viewBox="0 0 28 24" aria-hidden="true">
          <path d="M0 0c8 0 9 5 13 11 4 8 7 13 15 13H0z" fill="#d0d0d0" />
          <path d="M0 .5c8 0 9 5 13 11 4 7 7 12 15 12" fill="none" stroke="#2c2c2c" />
        </svg>
        <div className="ml-auto flex items-center gap-[8px] pr-[7px]">
          <Svg>
            <path d="M1 2h6l1 2h7v6H1z" fill="#e4e4e4" stroke="#999" />
            <ellipse cx="5" cy="9" rx="3.500" ry="2.200" stroke="#c8b400" strokeWidth="1.800" transform="rotate(30 5 9)" />
            <ellipse cx="10.500" cy="12" rx="3.500" ry="2.200" stroke="#a89400" strokeWidth="1.800" transform="rotate(30 10 12)" />
          </Svg>
          <Caret />
          <Sep />
          <Svg>
            <path d="M1 9c0-4 4-5 7-3l0-2 3 4-5 1c-2-1-3-1-3 1z" fill="#f08c2c" />
            <path d="M3 11c2 4 7 4 9 0" stroke="#2fa838" strokeWidth="2.200" />
            <path d="M9 4l2 3 5-6" stroke="#1f9c2c" strokeWidth="2.200" />
          </Svg>
          <Svg>
            <path d="M4 5h4l1 2h6v8H4z" fill="#ececec" stroke="#9a9a9a" />
            <path d="M0 4l5 4-5 4z" fill="#2c34d8" />
          </Svg>
          <ViewButtons />
        </div>
      </div>
      <div className="flex flex-1 flex-col border border-[#2c2c2c] bg-[#d0d0d0] p-[3px] pt-[2px]">
        <div className="flex flex-1 flex-col border-[3px] border-[#caef45] bg-white">
          <div className="flex h-[46px] items-center gap-[5px] bg-gradient-to-b from-white to-[#e2e2e2] pt-[2px] pl-[5px]">
            <span className="mt-[10px]"><Item /></span>
            <h2 className="text-[23px] leading-[30px] text-[#6a6a6a]">bb_Hochregallager_angepasst_stp</h2>
          </div>
          <div className="flex h-[22px] border-b border-[#a4a4a4] font-['Liberation_Sans',Arial,sans-serif] text-[14px]">
            <button className="border-t border-[#a4a4a4] bg-gradient-to-b from-[#e4e4e4] to-white pt-[2px] pl-[3px] font-bold">General</button>
            <svg width="18" height="22" viewBox="0 0 18 22" className="shrink-0" aria-hidden="true">
              <path d="M0 .5c7 0 7 21 18 21" fill="none" stroke="#a4a4a4" />
            </svg>
            <SubTab label="Reservation" />
            <SubTab label="Project" />
            <SubTab label="All" />
          </div>
          <div className="flex flex-1 items-start">
            <dl className="ml-[4px] w-[450px] shrink-0">
              <div className="border-b border-[#a4a4a4]">
                <Field label="Object:" h="h-[28px]">bb_Hochregallager_angepasst_stp</Field>
              </div>
              <div className="border-b border-[#a4a4a4] pt-[6px] pb-[4px]">
                <Field label="Name:" h="h-[22px]">bb_Hochregallager_angepasst_stp</Field>
                <Field label="Description:" h="h-[22px]">bb_Hochregallager_angepasst_stp</Field>
              </div>
              <div className="pt-[7px]">
                <Field label="Owner:" h="h-6"><Svg s={14}><Person /></Svg><a href="#" className="underline">infodba (infodba)</a></Field>
                <Field label="Group ID:" h="h-6">
                  <Svg s={14}><Person k={0.65} body="#7c4cc8" /><Person k={0.65} x={6} y={6} body="#3fa44c" /></Svg>
                  <a href="#" className="underline">dba</a>
                </Field>
                <Field label="Last Modifying User:" h="h-6"><Svg s={14}><Person /></Svg><a href="#" className="underline">infodba (infodba)</a></Field>
              </div>
            </dl>
            <div className="mt-[5px] ml-[2px] border border-[#a4a6aa] bg-white p-px">
              <Machine />
            </div>
          </div>
          <div className="mr-[5px] ml-[4px] flex h-[40px] gap-[15px] border-t border-[#a4a4a4] pt-[5px]">
            <ActionBtn label="Save Changes">
              <path d="M1 5h9v10H1zM3 11h5v4" stroke="#9c9c9c" fill="#eee" />
              <path d="M9 0v8M6 3l3-3 2 3M13 1v7M11 6l2 2 3-3" stroke="#8c8c8c" strokeWidth="1.800" />
            </ActionBtn>
            <ActionBtn label="Check Out..." off={false}>
              <path d="M1.500 7.500h13v7h-13z" fill="#dcdcdc" stroke="#7c7c7c" />
              <path d="M2 13.500h12v1.500H2z" fill="#444" />
              <path d="M6.500 10V5H4.500L8 .5 11.500 5h-2v5z" fill="#6cc41c" stroke="#2c6c10" />
            </ActionBtn>
            <ActionBtn label="Check In...">
              <path d="M1.500 6.500h13v8h-13z" fill="#eee" stroke="#9c9c9c" />
              <path d="M6.500 1h3v5h3L8 11 3.500 6h3z" fill="#8c8c8c" />
            </ActionBtn>
            <ActionBtn label="Save and Keep Checked-Out">
              <path d="M.5 4.500h9v6h-9z" fill="#eee" stroke="#9c9c9c" />
              <path d="M5 0v7M2.500 3L5 0l3 3" stroke="#8c8c8c" strokeWidth="1.600" />
              <path d="M7.500 8.500h8v7h-8zM10 12h3v3h-3z" fill="#f4f4f4" stroke="#8c8c8c" />
            </ActionBtn>
            <ActionBtn label="Cancel Checkout...">
              <path d="M7.500 5.500h8v8h-8z" fill="#eee" stroke="#bcbcbc" />
              <path d="M2 7l7 8M8 7l-7 8" stroke="#7c7c7c" strokeWidth="2" />
              <path d="M9 0v6M6.500 3L9 .5l3 3" stroke="#8c8c8c" strokeWidth="1.600" />
            </ActionBtn>
          </div>
        </div>
      </div>
    </section>
  )
}

function StatusBar() {
  return (
    <footer className="flex h-[30px] items-center bg-[#d0d0d0] pb-[2px] pl-[5px]">
      <Grip />
      <span className="ml-[9px] flex">
        <Svg>
          <path d="M.5 3.500h6v12h-6z" fill="#f4f8fb" stroke="#8094a4" />
          <path d="M0 3h7v3H0z" fill="#3c84c0" />
          <path d="M12 .5l1 3 3 1-3 1-1 3-1-3-3-1 3-1z" fill="#fdf4c0" stroke="#b48c1c" strokeWidth="0.800" />
        </Svg>
      </span>
      <span className="ml-[45px]">Ready</span>
      <span className="ml-auto flex"><Grip /></span>
      <span className="ml-[291px] flex"><Grip /></span>
      <span className="mr-3 ml-[9px] text-[#9e9e9e]">InfoCenter</span>
      <Grip />
      <button className="mr-[2px] ml-[6px] flex h-[21px] w-[39px] items-center justify-between rounded-[3px] border border-[#6c6c6c] bg-gradient-to-b from-[#f4f4f4] to-[#d8d8d8] pr-[6px] pl-[8px]">
        <Svg s={13}>
          <path d="M1 2h14v10l-4 4H1z" fill="#fbe468" stroke="#b8982c" />
          <path d="M5 0h6v4H5z" fill="#5c7484" />
        </Svg>
        0
      </button>
    </footer>
  )
}

const Cmd = () => (
  <svg width="30" height="26" viewBox="0 0 30 26" aria-hidden="true">
    <path d="M0 0h30v26H0z" fill="#8c949c" />
    <path d="M1 1h28v3H1z" fill="#d4dce4" />
    <path d="M1 4h28v21H1z" fill="#000" />
    <text x="3" y="13" fill="#fff" fontFamily="Liberation Mono" fontSize="8" fontWeight="bold">C:\_</text>
  </svg>
)

const TaskBtn = ({ label, active, children }: { label: string; active?: boolean; children: React.ReactNode }) => (
  <button
    aria-label={label}
    className={
      'flex h-[39px] w-[60px] items-center justify-center rounded-[3px] border border-[#42586f] shadow-[inset_0_0_0_1px_#e4eef8] ' +
      (active ? 'bg-gradient-to-b from-[#f4f8fc] to-[#cfdeef]' : 'bg-gradient-to-b from-[#c8d8ea] to-[#a9c1de]')
    }
  >
    {children}
  </button>
)

function Taskbar() {
  return (
    <div className="flex h-10 items-center border-t border-[#35424f] bg-[linear-gradient(to_right,#7d93ae,#a6c0dc_110px,#a6c0dc_1600px,#8194ab_1700px)] shadow-[inset_0_1px_0_#c4d8ec]">
      <button aria-label="Start" className="ml-[8px]">
        <svg width="38" height="38" viewBox="0 0 38 38" aria-hidden="true">
          <circle cx="19" cy="19" r="17.500" fill="#17415f" stroke="#4a6c8c" />
          <path d="M4 16a15 14 0 0 1 30 0c-8 4-22 4-30 0z" fill="#6f9cba" />
          <path d="M5 22c6 16 22 16 28 0-8 5-20 5-28 0z" fill="#2c8cc4" />
          <path d="M11 11c3-2 5-2 8 0l-2 7c-3-2-5-2-8 0z" fill="#ee6a2c" />
          <path d="M20 11.500c3 2 6 2 9 0l-2 7c-3 2-6 2-9 0z" fill="#8cc63c" />
          <path d="M8.500 19.500c3-2 5-2 8 0l-2 7c-3-2-5-2-8 0z" fill="#4ca4e4" />
          <path d="M17.500 20c3 2 6 2 9 0l-2 7c-3 2-6 2-9 0z" fill="#fccc3c" />
        </svg>
      </button>
      <button aria-label="Explorer" className="mr-[15px] ml-[26px]">
        <svg width="34" height="34" viewBox="0 0 34 34" aria-hidden="true">
          <path d="M2 6l4-3h8l2 3h14v24H2z" fill="#e9cf74" stroke="#b89838" />
          <path d="M5 5h5M15 8h6M23 10h6" stroke="#3ca42c" strokeWidth="2" />
          <path d="M15 8h5" stroke="#d83030" strokeWidth="2" />
          <path d="M2 10h30v20H2z" fill="#f8e89c" stroke="#c8a848" />
          <path d="M6 32V22c0-2 22-2 22 0v10h-4v-6H10v6z" fill="#9cccec" stroke="#5c9cc4" />
        </svg>
      </button>
      <div className="flex gap-[2px]">
        <TaskBtn label="Teamcenter"><TcLogo s={32} /></TaskBtn>
        <TaskBtn label="Excel">
          <svg width="30" height="30" viewBox="0 0 32 32" aria-hidden="true">
            <path d="M5 3l4-2h21v29H2V8z" fill="#dff0d8" stroke="#3c9c4c" strokeWidth="2" />
            <path d="M16 16h14l1 14H14z" fill="#f8fcf8" />
            <path d="M17 19h12M16 22h13M16 25h14M16 28h14" stroke="#6cac6c" />
            <path d="M6 5h5l4 6 5-6h3l-7 9 6 9h-5l-4-6-5 6H4l8-9z" fill="#2c8c3c" />
          </svg>
        </TaskBtn>
        <TaskBtn label="Sticky Notes">
          <svg width="34" height="28" viewBox="0 0 34 28" aria-hidden="true">
            <path d="M6 2l12 6-4 14-13-5z" fill="#8cd47c" stroke="#6cb45c" strokeWidth="0.600" />
            <path d="M9 7l13-2 4 14-14 3z" fill="#a4d4f0" />
            <path d="M14 9l15-3 5 15-15 5z" fill="#fcdc54" stroke="#d8b02c" strokeWidth="0.800" />
          </svg>
        </TaskBtn>
        <TaskBtn label="Command Prompt"><Cmd /></TaskBtn>
        <TaskBtn label="Command Prompt 2"><Cmd /></TaskBtn>
        <TaskBtn label="Teamcenter client" active><TcLogo s={32} green /></TaskBtn>
        <TaskBtn label="WordPad">
          <svg width="26" height="30" viewBox="0 0 26 30" aria-hidden="true">
            <path d="M2 1h22v6l1 21H1L2 7z" fill="#e8f4fb" stroke="#4c84ac" />
            <path d="M2 1h22v5H2z" fill="#4484b0" />
            <path d="M15 10h7M15 13h7M15 16h7" stroke="#3c78c0" strokeWidth="1.500" />
            <path d="M4 20.500h18M4 23.500h16M4 26h12" stroke="#9cacb8" />
            <text x="3" y="18" fill="#ee7c1c" fontFamily="Liberation Serif" fontSize="15" fontWeight="bold">A</text>
          </svg>
        </TaskBtn>
      </div>
      <div className="ml-auto flex h-full items-center text-white">
        <span className="mb-1">DE</span>
        <svg width="9" height="5" viewBox="0 0 9 5" className="mt-[3px] ml-[16px]" aria-hidden="true"><path d="M0 5L4.500 0 9 5z" fill="#fff" /></svg>
        <span className="ml-[12px] flex items-center gap-[8px]">
          <Svg>
            <path d="M1.500 1v15" stroke="#fff" strokeWidth="1.500" />
            <path d="M2.500 2c4-1 6 2 10 0v7c-4 2-6-1-10 0z" fill="#fff" stroke="#555" strokeWidth="0.600" />
            <circle cx="11" cy="11.500" r="4.500" fill="#d82820" />
            <path d="M9 9.500l4 4M13 9.500l-4 4" stroke="#fff" strokeWidth="1.500" />
          </Svg>
          <Svg>
            <path d="M5.500 4.500h10v8h-10z" fill="#6c88a4" stroke="#fff" />
            <path d="M1.500 0v4h4V0M3.500 4v11h4" stroke="#fff" strokeWidth="1.200" />
            <path d="M11 6l5 10H6z" fill="#fcd81c" stroke="#8c7408" strokeWidth="0.700" />
            <path d="M11 9v3.500M11 13.500v1" stroke="#111" strokeWidth="1.200" />
          </Svg>
          <Svg>
            <path d="M1 5.500h3l4-4v13l-4-4H1z" fill="#fff" stroke="#556" strokeWidth="0.600" />
            <path d="M10 5.500c1 1.500 1 3.500 0 5M12 3.500c2 3 2 6 0 9M14 2c2.500 4 2.500 8 0 12" stroke="#fff" />
          </Svg>
        </span>
        <time className="ml-[17px] text-center leading-[17px]">
          <span className="block">09:54</span>
          <span className="block">24.06.2013</span>
        </time>
        <button aria-label="Show desktop" className="ml-[12px] h-full w-[14px] border-l border-[#4c6078] bg-gradient-to-br from-[#c4d0dc] via-[#74879c] to-[#94a6ba]" />
      </div>
    </div>
  )
}

function App() {
  return (
    <div className="flex min-h-screen flex-col bg-[#d0d0d0] font-['Open_Sans','Noto_Sans',sans-serif] text-[11px] leading-[15px] text-black">
      <TitleBar />
      <Menu />
      <Toolbar />
      <Banner />
      <main className="flex flex-1 gap-[2px] pt-[6px]">
        <Sidebar />
        <TreeView />
        <ViewerPane />
      </main>
      <StatusBar />
      <Taskbar />
    </div>
  )
}

export default App
